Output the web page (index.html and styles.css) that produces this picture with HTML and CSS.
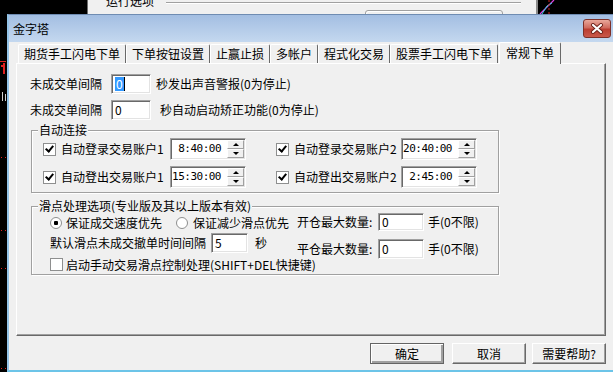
FILE: index.html
```html
<!DOCTYPE html>
<html lang="zh-CN">
<head>
    <meta charset="UTF-8">
    <title>金字塔</title>
    <link rel="stylesheet" href="styles.css">
</head>
<body>
    <svg class="desk-left" width="7" height="372" viewBox="0 0 7 372">
        <rect x="0" y="61" width="6" height="1" fill="#e02020"/>
        <rect x="3" y="63" width="2" height="11" fill="#e02020"/>
        <rect x="1" y="65" width="2" height="2" fill="#e02020"/>
        <rect x="2" y="92" width="1" height="9" fill="#cfcfcf"/>
        <rect x="5" y="94" width="1" height="7" fill="#cfcfcf"/>
        <rect x="1" y="157" width="1" height="1" fill="#e02020"/>
        <rect x="5" y="157" width="1" height="1" fill="#e02020"/>
        <rect x="1" y="230" width="1" height="1" fill="#e02020"/>
        <rect x="5" y="230" width="1" height="1" fill="#e02020"/>
        <rect x="1" y="268" width="1" height="1" fill="#e02020"/>
        <rect x="5" y="268" width="1" height="1" fill="#e02020"/>
        <rect x="1" y="368" width="1" height="1" fill="#e02020"/>
        <rect x="5" y="368" width="1" height="1" fill="#e02020"/>
    </svg>

    <div class="backwin">
        <span class="bw-text">运行选项</span>
        <span class="bw-line"></span>
        <span class="bw-box"></span>
    </div>

    <svg class="chart" width="70" height="14" viewBox="0 0 70 14">
        <path d="M2 14 L16 0" stroke="#e040e0" stroke-width="1.2" fill="none"/>
        <path d="M4 14 L9 6 L14 3" stroke="#30d0e0" stroke-width="1" fill="none"/>
        <path d="M11 0 V14" stroke="#d02020" stroke-width="1" stroke-dasharray="2 2"/>
    </svg>

    <div class="dialog">
        <div class="titlebar">
            <span class="title">金字塔</span>
            <div class="close">
                <svg width="14" height="11" viewBox="0 0 14 11">
                    <path d="M3 2 L11 9 M11 2 L3 9" stroke="#6b2018" stroke-width="4" stroke-linecap="round"/>
                    <path d="M3 2 L11 9 M11 2 L3 9" stroke="#fff" stroke-width="2.2" stroke-linecap="round"/>
                </svg>
            </div>
        </div>

        <div class="client">
            <div class="tabs">
                <div class="tab">期货手工闪电下单</div>
                <div class="tab">下单按钮设置</div>
                <div class="tab">止赢止损</div>
                <div class="tab">多帐户</div>
                <div class="tab">程式化交易</div>
                <div class="tab">股票手工闪电下单</div>
                <div class="tab active">常规下单</div>
            </div>

            <div class="panel">
                <div class="row">
                    <span class="lbl">未成交单间隔</span>
                    <div class="field w40"><span class="sel">0</span><span class="caret"></span></div>
                    <span class="after">秒发出声音警报(0为停止)</span>
                </div>
                <div class="row second">
                    <span class="lbl">未成交单间隔</span>
                    <div class="field w40">0</div>
                    <span class="after wide">秒自动启动矫正功能(0为停止)</span>
                </div>

                <div class="group connect">
                    <span class="legend">自动连接</span>
                    <div class="crow">
                        <label class="cl"><span class="chk on"></span>自动登录交易账户1</label>
                        <div class="spin"><span class="time">8:40:00</span><div class="sbtns"><span class="sb up"></span><span class="sb down"></span></div></div>
                        <label class="cl right"><span class="chk on"></span>自动登录交易账户2</label>
                        <div class="spin"><span class="time">20:40:00</span><div class="sbtns"><span class="sb up"></span><span class="sb down"></span></div></div>
                    </div>
                    <div class="crow">
                        <label class="cl"><span class="chk on"></span>自动登出交易账户1</label>
                        <div class="spin"><span class="time">15:30:00</span><div class="sbtns"><span class="sb up"></span><span class="sb down"></span></div></div>
                        <label class="cl right"><span class="chk on"></span>自动登出交易账户2</label>
                        <div class="spin"><span class="time">2:45:00</span><div class="sbtns"><span class="sb up"></span><span class="sb down"></span></div></div>
                    </div>
                </div>

                <div class="group slip">
                    <span class="legend">滑点处理选项(专业版及其以上版本有效)</span>
                    <div class="slip-left">
                        <div class="srow s1">
                            <span class="radio on"></span><span>保证成交速度优先</span>
                            <span class="radio second"></span><span>保证减少滑点优先</span>
                        </div>
                        <div class="srow s2">
                            <span>默认滑点未成交撤单时间间隔</span>
                            <div class="field w37">5</div>
                            <span class="sec">秒</span>
                        </div>
                        <div class="srow s3">
                            <span class="chk"></span><span>启动手动交易滑点控制处理(SHIFT+DEL快捷键)</span>
                        </div>
                    </div>
                    <div class="slip-right">
                        <div class="srow q1">
                            <span class="qlbl">开仓最大数量:</span>
                            <div class="field w46 h18">0</div>
                            <span class="unit">手(0不限)</span>
                        </div>
                        <div class="srow q2">
                            <span class="qlbl">平仓最大数量:</span>
                            <div class="field w46">0</div>
                            <span class="unit">手(0不限)</span>
                        </div>
                    </div>
                </div>
            </div>

            <div class="actions">
                <button class="btn default">确定</button>
                <button class="btn">取消</button>
                <button class="btn last">需要帮助?</button>
            </div>
        </div>
    </div>
</body>
</html>
```

FILE: styles.css
```css
body {
    margin: 0;
    width: 613px;
    height: 372px;
    position: relative;
    overflow: hidden;
    background-color: #000;
    font-family: "Noto Sans CJK SC", sans-serif;
    font-size: 12px;
    line-height: 16px;
    color: #000;
}

/* desktop behind the dialog */
.desk-left {
    position: absolute;
    left: 0;
    top: 0;
}

.backwin {
    position: absolute;
    left: 87px;
    top: 0;
    width: 448px;
    height: 14px;
    background-color: #f0f0f0;
    border-left: 1px solid #6d6d6d;
    border-right: 2px solid #8a8a8a;
    overflow: hidden;
}

.bw-text {
    position: absolute;
    left: 18px;
    top: -6px;
    line-height: 14px;
}

.bw-line {
    position: absolute;
    left: 78px;
    top: 2px;
    width: 355px;
    height: 1px;
    background-color: #a0a0a0;
    border-bottom: 1px solid #fff;
}

.bw-box {
    position: absolute;
    left: 277px;
    top: 10px;
    width: 136px;
    height: 10px;
    border: 1px solid #a0a0a0;
    border-radius: 3px;
    box-shadow: inset 1px 1px #fff;
}

.chart {
    position: absolute;
    left: 538px;
    top: 0;
}

/* dialog */
.dialog {
    position: absolute;
    left: 7px;
    top: 14px;
    width: 606px;
    height: 358px;
    box-sizing: border-box;
    background-color: #f0f0f0;
    border-top: 1px solid #6f8cb2;
    border-left: 2px solid #94c4e8;
    border-bottom: 2px solid #6cc4e8;
    display: flex;
    flex-direction: column;
}

.titlebar {
    height: 27px;
    flex-shrink: 0;
    background: linear-gradient(#a3bee2, #c4d8ef);
    display: flex;
    align-items: center;
    justify-content: space-between;
    padding-left: 4px;
}

.title {
    font-size: 12px;
    color: #000;
}

.close {
    width: 28px;
    height: 19px;
    box-sizing: border-box;
    margin-right: 2px;
    border: 1px solid #7e3028;
    border-radius: 3px;
    background: linear-gradient(#e9a89b, #d06b5e 45%, #bb3e31 55%, #c9584a);
    display: flex;
    align-items: center;
    justify-content: center;
}

.client {
    flex: 1;
    padding-left: 7px;
}

/* tabs */
.tabs {
    display: flex;
    align-items: flex-end;
    height: 21px;
    padding-left: 2px;
}

.tab {
    height: 19px;
    box-sizing: border-box;
    padding: 0 5px;
    border: 1px solid #fff;
    border-right-color: #696969;
    border-bottom: none;
    border-radius: 2px 2px 0 0;
    line-height: 18px;
    white-space: nowrap;
}

.tab.active {
    position: relative;
    z-index: 1;
    height: 22px;
    margin-left: 1px;
    margin-bottom: -1px;
    padding: 0 6px;
    background-color: #f0f0f0;
    line-height: 19px;
}

.panel {
    width: 590px;
    height: 273px;
    box-sizing: border-box;
    border-top: 1px solid #fff;
    border-left: 1px solid #fff;
    border-right: 1px solid #696969;
    border-bottom: 1px solid #696969;
    box-shadow: inset -1px -1px #a0a0a0;
    padding: 10px 0 0 13px;
}

/* inputs */
.field {
    height: 20px;
    box-sizing: border-box;
    background-color: #fff;
    border: 1px solid;
    border-color: #a0a0a0 #fff #fff #a0a0a0;
    box-shadow: inset 1px 1px #696969, inset -1px -1px #e3e3e3;
    padding-left: 3px;
    line-height: 18px;
    flex-shrink: 0;
    display: flex;
    align-items: center;
}

.w40 { width: 40px; }
.w37 { width: 37px; }
.w46 { width: 46px; }
.h18 { height: 18px; }

.sel {
    background-color: #3399ff;
    color: #fff;
    line-height: 14px;
    padding: 0 1px;
}

.caret {
    width: 1px;
    height: 14px;
    background-color: #000;
}

.row {
    display: flex;
    align-items: center;
    height: 20px;
    white-space: nowrap;
}

.row.second {
    margin-top: 6px;
}

.lbl {
    width: 81px;
}

.after {
    margin-left: 5px;
}

.after.wide {
    margin-left: 9px;
}

/* group boxes */
.group {
    position: relative;
    width: 468px;
    box-sizing: border-box;
    margin-left: 1px;
    border: 1px solid #a0a0a0;
    box-shadow: inset 1px 1px #fff, 1px 1px #fff;
}

.legend {
    position: absolute;
    left: 6px;
    top: -9px;
    padding: 0 1px;
    background-color: #f0f0f0;
    white-space: nowrap;
}

.connect {
    margin-top: 10px;
    padding: 7px 0 4px 11px;
}

.crow {
    display: flex;
    align-items: center;
    height: 22px;
    white-space: nowrap;
}

.crow + .crow {
    margin-top: 6px;
}

.cl {
    width: 127px;
    display: flex;
    align-items: center;
}

.cl.right {
    width: 125px;
    margin-left: 30px;
}

.chk {
    width: 13px;
    height: 13px;
    box-sizing: border-box;
    flex-shrink: 0;
    background-color: #fff;
    border: 1px solid #8e8f8f;
    margin-right: 5px;
    position: relative;
}

.chk.on::after {
    content: "";
    position: absolute;
    left: 3px;
    top: 0;
    width: 3px;
    height: 6px;
    border: solid #000;
    border-width: 0 2px 2px 0;
    transform: rotate(40deg);
}

.spin {
    width: 76px;
    height: 22px;
    box-sizing: border-box;
    background-color: #fff;
    border: 1px solid;
    border-color: #a0a0a0 #fff #fff #a0a0a0;
    box-shadow: inset 1px 1px #696969, inset -1px -1px #e3e3e3;
    display: flex;
    padding: 1px;
}

.time {
    flex: 1;
    text-align: right;
    padding-right: 6px;
    font-family: "DejaVu Sans Mono", monospace;
    font-size: 11px;
    letter-spacing: -0.5px;
    line-height: 18px;
}

.sbtns {
    width: 17px;
    display: flex;
    flex-direction: column;
    background-color: #f0f0f0;
}

.sb {
    flex: 1;
    box-sizing: border-box;
    border: 1px solid;
    border-color: #fff #a0a0a0 #a0a0a0 #fff;
    display: flex;
    align-items: center;
    justify-content: center;
}

.sb.up::after {
    content: "";
    border: 3px solid transparent;
    border-bottom: 3px solid #000;
    border-top: none;
}

.sb.down::after {
    content: "";
    border: 3px solid transparent;
    border-top: 3px solid #000;
    border-bottom: none;
}

/* slippage group */
.slip {
    margin-top: 13px;
    padding: 7px 0 1px 18px;
    display: flex;
}

.slip-left {
    width: 247px;
    flex-shrink: 0;
}

.srow {
    display: flex;
    align-items: center;
    white-space: nowrap;
}

.s1 { height: 18px; }
.s2 { height: 20px; margin-top: 1px; }
.s3 { height: 17px; margin-top: 3px; }

.s3 .chk {
    margin-right: 3px;
}

.radio {
    width: 12px;
    height: 12px;
    box-sizing: border-box;
    flex-shrink: 0;
    border-radius: 50%;
    border: 1px solid #8e8f8f;
    background-color: #fff;
    margin-right: 4px;
}

.radio.on {
    background: radial-gradient(circle, #000 0, #000 2px, #fff 2.5px);
}

.radio.second {
    margin-left: 14px;
    margin-right: 5px;
}

.s2 .field {
    margin-left: 5px;
}

.sec {
    margin-left: 7px;
}

.slip-right {
    margin-top: -1px;
}

.q2 {
    margin-top: 8px;
}

.q1 { height: 18px; }
.q2 { height: 20px; }

.qlbl {
    width: 81px;
}

.unit {
    margin-left: 4px;
}

/* buttons */
.actions {
    width: 590px;
    display: flex;
    justify-content: flex-end;
    margin-top: 7px;
}

.btn {
    width: 74px;
    height: 21px;
    box-sizing: border-box;
    margin: 0 8px 0 0;
    padding: 0;
    font-family: "Noto Sans CJK SC", sans-serif;
    font-size: 12px;
    line-height: 17px;
    color: #000;
    background-color: #f0f0f0;
    border: 1px solid;
    border-color: #fff #696969 #696969 #fff;
    box-shadow: inset -1px -1px #a0a0a0;
}

.btn.default {
    border: 1px solid #646464;
    box-shadow: inset 1px 1px #fff, inset -2px -2px #a0a0a0;
}

.btn + .btn.last {
    margin-right: 0;
}

.btn:nth-child(2) {
    margin-right: 6px;
}
```
